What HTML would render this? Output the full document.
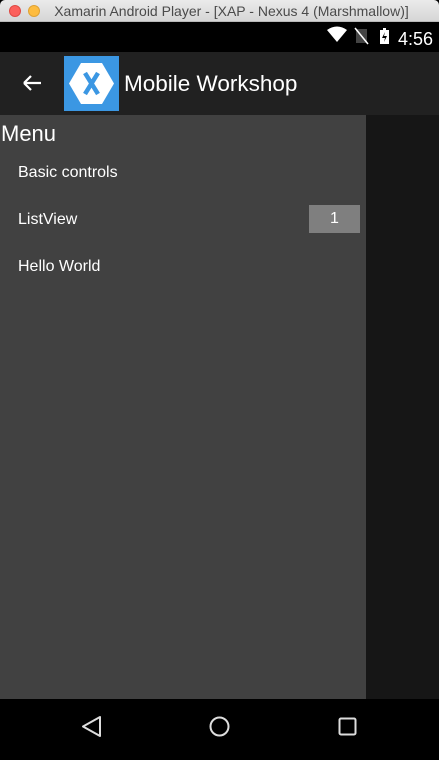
<!DOCTYPE html>
<html><head><meta charset="utf-8"><style>
*{margin:0;padding:0;box-sizing:border-box}
html,body{width:439px;height:755px;overflow:hidden;background:#000;font-family:"Liberation Sans",sans-serif}
.tb{position:absolute;left:0;top:0;width:439px;height:22px;background:linear-gradient(#ebebeb,#d6d6d6);border-bottom:1px solid #b9b9b9;border-radius:5px 5px 0 0}
.tb .t{position:absolute;left:0;right:0;top:3px;text-align:center;font-size:14px;color:#4a4a4a;padding-left:24px}
.dot{position:absolute;top:5px;width:12px;height:12px;border-radius:50%}
.sb{position:absolute;top:22px;left:0;width:439px;height:30px;background:#000}
.ab{position:absolute;top:52px;left:0;width:439px;height:63px;background:#212121}
.drawer{position:absolute;top:115px;left:0;width:366px;height:584px;background:#414141}
.right{position:absolute;top:115px;left:366px;width:73px;height:584px;background:#161616}
.nav{position:absolute;top:699px;left:0;width:439px;height:56px;background:#000;border-radius:0 0 5px 5px}
.item{position:absolute;left:18px;color:#fff;font-size:16px}
</style></head><body>
<div class="tb">
<div class="dot" style="left:9px;background:#fc605c;border:1px solid #de4a45"></div>
<div class="dot" style="left:28px;background:#fdbc40;border:1px solid #dea236"></div>
<div class="t">Xamarin Android Player - [XAP - Nexus 4 (Marshmallow)]</div>
</div>
<div class="sb">
<svg width="439" height="30" style="position:absolute;left:0;top:0">
<path d="M327 8 Q337 1 347 8 L337 20 Z" fill="#fff"/>
<path d="M356 7 L367 7 L367 21 L356 21 Z" fill="#444"/>
<path d="M355 6 L368 22" stroke="#fff" stroke-width="1.5"/>
<path d="M380 8 L383 8 L383 6 L386 6 L386 8 L389 8 L389 22 L380 22 Z" fill="#fff"/>
<path d="M385 10 L382 16 L385 16 L384 20 L387 14 L384 14 Z" fill="#000"/>
<text x="398" y="23" fill="#fff" font-size="18" font-family="Liberation Sans">4:56</text>
</svg>
</div>
<div class="ab">
<svg width="130" height="63" style="position:absolute;left:0;top:0">
<path d="M24 31 L41 31 M24 31 L31 24 M24 31 L31 38" stroke="#fff" stroke-width="2.2" fill="none"/>
<rect x="64" y="4" width="55" height="55" fill="#3b97e3"/>
<path d="M81 11 L102 11 L114 31.5 L102 52 L81 52 L69 31.5 Z" fill="#fff"/>
<path d="M85 21 L98 42 M98 21 L85 42" stroke="#3b97e3" stroke-width="4.5"/>
</svg>
<div style="position:absolute;left:124px;top:19px;color:#fff;font-size:22.5px">Mobile Workshop</div>
</div>
<div class="drawer">
<div style="position:absolute;left:1px;top:6px;color:#fff;font-size:22px">Menu</div>
<div class="item" style="top:49px">Basic controls</div>
<div class="item" style="top:96px">ListView</div>
<div style="position:absolute;left:309px;top:90px;width:51px;height:28px;background:#7f7f7f;color:#fff;font-size:16px;text-align:center;line-height:28px">1</div>
<div class="item" style="top:143px">Hello World</div>
</div>
<div class="right"></div>
<div class="nav">
<svg width="439" height="56">
<path d="M100 18 L100 37 L83 27.5 Z" fill="none" stroke="#ddd" stroke-width="2" stroke-linejoin="round"/>
<circle cx="219.5" cy="27.5" r="9" fill="none" stroke="#ddd" stroke-width="2"/>
<rect x="339.5" y="19.5" width="16" height="16" rx="1.5" fill="none" stroke="#ddd" stroke-width="2"/>
</svg>
</div>
</body></html>
